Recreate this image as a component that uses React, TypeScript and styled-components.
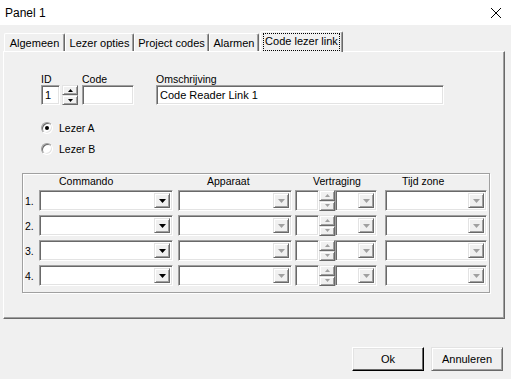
import React from "react";
import styled, { createGlobalStyle } from "styled-components";

const Global = createGlobalStyle`
  html, body { margin: 0; padding: 0; background: #f0f0f0; }
  body { font-family: "Liberation Sans", Arial, sans-serif; font-size: 10.5px; color: #000; }
`;

const Window = styled.div`
  width: 511px;
  height: 379px;
  display: flex;
  flex-direction: column;
  background: #f0f0f0;
  overflow: hidden;
`;

const TitleBar = styled.div`
  height: 25px;
  flex: none;
  background: #fff;
  display: flex;
  align-items: center;
  justify-content: space-between;
  padding: 0 9px 0 5px;
  font-size: 12px;
`;

const CloseBtn = styled.div`
  width: 12px;
  height: 12px;
  display: flex;
`;

const Body = styled.div`
  flex: 1;
  display: flex;
  flex-direction: column;
  padding: 6px 6px 0 3px;
`;

const TabStrip = styled.div`
  height: 20px;
  display: flex;
  align-items: flex-end;
  padding-left: 1px;
  position: relative;
  z-index: 1;
`;

const Tab = styled.div<{ $w: number; $active?: boolean }>`
  box-sizing: border-box;
  width: ${(p) => p.$w}px;
  height: ${(p) => (p.$active ? 21 : 18)}px;
  margin-bottom: ${(p) => (p.$active ? -1 : 0)}px;
  margin-left: ${(p) => (p.$active ? 1 : 0)}px;
  background: #f0f0f0;
  border-top: 1px solid #fff;
  border-left: 1px solid #fff;
  border-right: 1px solid #696969;
  box-shadow: inset -1px 0 0 #a0a0a0;
  border-radius: 2px 2px 0 0;
  display: flex;
  align-items: ${(p) => (p.$active ? "flex-start" : "center")};
  padding-top: ${(p) => (p.$active ? 2 : 0)}px;
  justify-content: center;
  white-space: nowrap;
  font-size: 11px;
`;

const FocusText = styled.span`
  outline: 1px dotted #000;
  outline-offset: 0;
  padding: 1px 1px 2px;
  line-height: 13px;
`;

const Panel = styled.div`
  box-sizing: border-box;
  height: 268px;
  border-top: 1px solid #fff;
  border-left: 1px solid #fff;
  border-right: 1px solid #696969;
  border-bottom: 1px solid #696969;
  box-shadow: inset -1px -1px 0 #a0a0a0;
  display: flex;
  flex-direction: column;
  padding: 21px 0 0 0;
`;

const FieldsRow = styled.div`
  display: flex;
  align-items: flex-start;
  padding-left: 37px;
`;

const Field = styled.div<{ $ml?: number }>`
  display: flex;
  flex-direction: column;
  margin-left: ${(p) => p.$ml ?? 0}px;
`;

const Label = styled.div`
  line-height: 12px;
  height: 12px;
  white-space: nowrap;
`;

const InputRow = styled.div`
  display: flex;
  align-items: stretch;
`;

const sunken = `
  box-sizing: border-box;
  background: #fff;
  border: 1px solid;
  border-color: #a0a0a0 #fff #fff #a0a0a0;
  box-shadow: inset 1px 1px 0 #696969, inset -1px -1px 0 #e3e3e3;
`;

const TextBox = styled.div<{ $w: number }>`
  ${sunken}
  width: ${(p) => p.$w}px;
  height: 20px;
  padding: 3px 0 0 3px;
  line-height: 13px;
  font-size: 11px;
  white-space: nowrap;
  overflow: hidden;
`;

const SpinBox = styled.div<{ $ml?: number }>`
  width: 16px;
  display: flex;
  flex-direction: column;
  margin-left: ${(p) => p.$ml ?? 0}px;
`;

const raised = `
  box-sizing: border-box;
  background: #f0f0f0;
  border: 1px solid;
  border-color: #e3e3e3 #696969 #696969 #e3e3e3;
  box-shadow: inset 1px 1px 0 #fff, inset -1px -1px 0 #a0a0a0;
`;

const SpinButton = styled.div`
  ${raised}
  flex: 1;
  display: flex;
  align-items: center;
  justify-content: center;
`;

const RadioGroup = styled.div`
  display: flex;
  flex-direction: column;
  gap: 8px;
  margin-top: 16px;
  padding-left: 37px;
`;

const RadioRow = styled.div`
  display: flex;
  align-items: center;
  height: 13px;
  gap: 6px;
`;

const RadioCircle = styled.div<{ $checked?: boolean }>`
  box-sizing: border-box;
  width: 12px;
  height: 12px;
  border-radius: 50%;
  background: #fff;
  border: 1px solid;
  border-color: #a0a0a0 #fff #fff #a0a0a0;
  box-shadow: inset 1px 1px 0 #696969, inset -1px -1px 0 #e3e3e3;
  display: flex;
  align-items: center;
  justify-content: center;
  &::after {
    content: "";
    width: 4px;
    height: 4px;
    border-radius: 50%;
    background: #000;
    display: ${(p) => (p.$checked ? "block" : "none")};
  }
`;

const GroupBox = styled.div`
  box-sizing: border-box;
  margin: 18px 0 0 18px;
  width: 468px;
  height: 120px;
  border: 1px solid #a0a0a0;
  box-shadow: inset 1px 1px 0 #fff, 1px 1px 0 #fff;
  display: flex;
  flex-direction: column;
`;

const HeaderRow = styled.div`
  display: flex;
  height: 16px;
  line-height: 13px;
  padding-top: 1px;
  box-sizing: border-box;
`;

const HeaderCell = styled.div<{ $w: number; $pl: number }>`
  width: ${(p) => p.$w}px;
  padding-left: ${(p) => p.$pl}px;
  box-sizing: border-box;
  white-space: nowrap;
`;

const Rows = styled.div`
  display: flex;
  flex-direction: column;
  gap: 4px;
`;

const Row = styled.div`
  display: flex;
  align-items: center;
  height: 21px;
`;

const NumLabel = styled.div`
  width: 16px;
  padding-left: 2px;
  box-sizing: border-box;
`;

const Combo = styled.div<{ $w: number; $ml?: number }>`
  ${sunken}
  width: ${(p) => p.$w}px;
  height: 21px;
  margin-left: ${(p) => p.$ml ?? 0}px;
  display: flex;
  justify-content: flex-end;
  padding: 2px 2px 2px 0;
`;

const DropButton = styled.div`
  ${raised}
  width: 16px;
  height: 100%;
  display: flex;
  align-items: center;
  justify-content: center;
`;

const SmallText = styled.div<{ $w: number; $ml?: number }>`
  ${sunken}
  width: ${(p) => p.$w}px;
  height: 21px;
  margin-left: ${(p) => p.$ml ?? 0}px;
`;

const SmallSpin = styled.div`
  width: 16px;
  height: 21px;
  display: flex;
  flex-direction: column;
`;

const Footer = styled.div`
  display: flex;
  justify-content: flex-end;
  gap: 7px;
  margin-top: 28px;
  padding-right: 2px;
`;

const Button = styled.div<{ $default?: boolean }>`
  ${raised}
  width: 72px;
  height: 24px;
  display: flex;
  align-items: center;
  justify-content: center;
  font-size: 11px;
  ${(p) =>
    p.$default
      ? `border-color: #fff #000 #000 #fff; box-shadow: inset -1px -1px 0 #696969, inset 1px 1px 0 #e3e3e3;`
      : ``}
`;

const Arrow = ({ down, color = "#000", w = 7 }: { down?: boolean; color?: string; w?: number }) => {
  const h = Math.ceil(w / 2);
  return (
    <svg width={w} height={h} viewBox={`0 0 ${w} ${h}`}>
      {down ? (
        <polygon points={`0,0 ${w},0 ${w / 2},${h}`} fill={color} />
      ) : (
        <polygon points={`0,${h} ${w},${h} ${w / 2},0`} fill={color} />
      )}
    </svg>
  );
};

const ComboBox = ({ w, ml, enabled }: { w: number; ml?: number; enabled?: boolean }) => (
  <Combo $w={w} $ml={ml}>
    <DropButton>
      <Arrow down color={enabled ? "#000" : "#a0a0a0"} />
    </DropButton>
  </Combo>
);

const rows = ["1.", "2.", "3.", "4."];

export default function App() {
  return (
    <Window>
      <Global />
      <TitleBar>
        <span>Panel 1</span>
        <CloseBtn>
          <svg width="12" height="12" viewBox="0 0 12 12">
            <path d="M1 1 L11 11 M11 1 L1 11" stroke="#000" strokeWidth="1" fill="none" />
          </svg>
        </CloseBtn>
      </TitleBar>
      <Body>
        <TabStrip>
          <Tab $w={61}>Algemeen</Tab>
          <Tab $w={69}>Lezer opties</Tab>
          <Tab $w={75}>Project codes</Tab>
          <Tab $w={50}>Alarmen</Tab>
          <Tab $w={83} $active>
            <FocusText>Code lezer link</FocusText>
          </Tab>
        </TabStrip>
        <Panel>
          <FieldsRow>
            <Field>
              <Label>ID</Label>
              <InputRow>
                <TextBox $w={19}>1</TextBox>
                <SpinBox $ml={2}>
                  <SpinButton>
                    <Arrow color="#000" w={5} />
                  </SpinButton>
                  <SpinButton>
                    <Arrow down color="#000" w={5} />
                  </SpinButton>
                </SpinBox>
              </InputRow>
            </Field>
            <Field $ml={4}>
              <Label>Code</Label>
              <TextBox $w={52} />
            </Field>
            <Field $ml={22}>
              <Label>Omschrijving</Label>
              <TextBox $w={288}>Code Reader Link 1</TextBox>
            </Field>
          </FieldsRow>
          <RadioGroup>
            <RadioRow>
              <RadioCircle $checked />
              <span>Lezer A</span>
            </RadioRow>
            <RadioRow>
              <RadioCircle />
              <span>Lezer B</span>
            </RadioRow>
          </RadioGroup>
          <GroupBox>
            <HeaderRow>
              <HeaderCell $w={16} $pl={0} />
              <HeaderCell $w={139} $pl={20}>Commando</HeaderCell>
              <HeaderCell $w={117} $pl={29}>Apparaat</HeaderCell>
              <HeaderCell $w={90} $pl={18}>Vertraging</HeaderCell>
              <HeaderCell $w={100} $pl={17}>Tijd zone</HeaderCell>
            </HeaderRow>
            <Rows>
              {rows.map((n) => (
                <Row key={n}>
                  <NumLabel>{n}</NumLabel>
                  <ComboBox w={134} enabled />
                  <ComboBox w={114} ml={5} />
                  <SmallText $w={24} $ml={3} />
                  <SmallSpin>
                    <SpinButton>
                      <Arrow color="#a0a0a0" w={5} />
                    </SpinButton>
                    <SpinButton>
                      <Arrow down color="#a0a0a0" w={5} />
                    </SpinButton>
                  </SmallSpin>
                  <ComboBox w={42} />
                  <ComboBox w={102} ml={8} />
                </Row>
              ))}
            </Rows>
          </GroupBox>
        </Panel>
        <Footer>
          <Button $default>Ok</Button>
          <Button>Annuleren</Button>
        </Footer>
      </Body>
    </Window>
  );
}
